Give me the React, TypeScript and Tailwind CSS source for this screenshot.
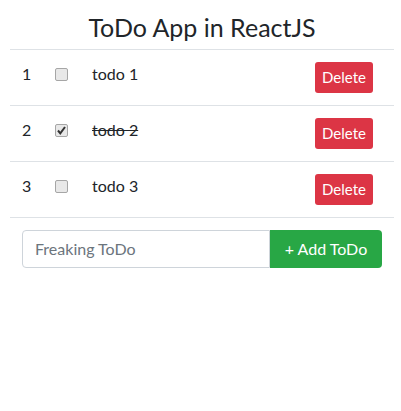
import { useState } from 'react'

type Todo = { id: number; text: string; done: boolean }

function Check({ checked, onClick }: { checked: boolean; onClick: () => void }) {
  return (
    <button
      type="button"
      onClick={onClick}
      className="w-[13px] h-[13px] rounded-[2px] border border-[#a6a6a6] bg-[#e8e8e8] flex items-center justify-center p-0"
    >
      {checked && (
        <svg width="11" height="11" viewBox="0 0 11 11">
          <path d="M2 5.5 L4.3 8.3 L9 2" fill="none" stroke="#333" strokeWidth="2" />
        </svg>
      )}
    </button>
  )
}

export default function App() {
  const [todos, setTodos] = useState<Todo[]>([
    { id: 1, text: 'todo 1', done: false },
    { id: 2, text: 'todo 2', done: true },
    { id: 3, text: 'todo 3', done: false },
  ])
  const [draft, setDraft] = useState('')

  const add = () => {
    if (!draft.trim()) return
    setTodos(t => [...t, { id: t.length + 1, text: draft, done: false }])
    setDraft('')
  }

  return (
    <div className="w-[401px] h-[411px] bg-white pl-[10px] pr-[7px] pt-[12px] font-['Lato',sans-serif] text-[#212529]">
      <h3 className="text-center text-[25px] leading-[31px] mb-[6px]">ToDo App in ReactJS</h3>

      <div className="border-b border-[#dee2e6]">
        {todos.map((todo, i) => (
          <div
            key={todo.id}
            className="h-[56px] border-t border-[#dee2e6] flex items-start pt-[12px] pl-[12px] pr-[21px] text-[16px] leading-[24px]"
          >
            <span className="w-[33px]">{i + 1}</span>
            <span className="w-[37px] h-[24px] flex items-center">
              <Check
                checked={todo.done}
                onClick={() =>
                  setTodos(t => t.map(x => (x.id === todo.id ? { ...x, done: !x.done } : x)))
                }
              />
            </span>
            <span className={todo.done ? 'line-through' : ''}>{todo.text}</span>
            <button
              type="button"
              onClick={() => setTodos(t => t.filter(x => x.id !== todo.id))}
              className="ml-auto w-[58px] h-[31px] rounded-[3px] bg-[#dc3545] text-white text-[15px] leading-[31px]"
            >
              Delete
            </button>
          </div>
        ))}
      </div>

      <div className="flex mx-[12px] mt-[12px] h-[38px]">
        <input
          value={draft}
          onChange={e => setDraft(e.target.value)}
          placeholder="Freaking ToDo"
          className="flex-1 min-w-0 border border-[#ced4da] rounded-l-[4px] px-[12px] text-[16px] placeholder:text-[#6c757d] outline-none"
        />
        <button
          type="button"
          onClick={add}
          className="w-[112px] bg-[#28a745] text-white text-[16px] rounded-r-[4px]"
        >
          + Add ToDo
        </button>
      </div>
    </div>
  )
}
